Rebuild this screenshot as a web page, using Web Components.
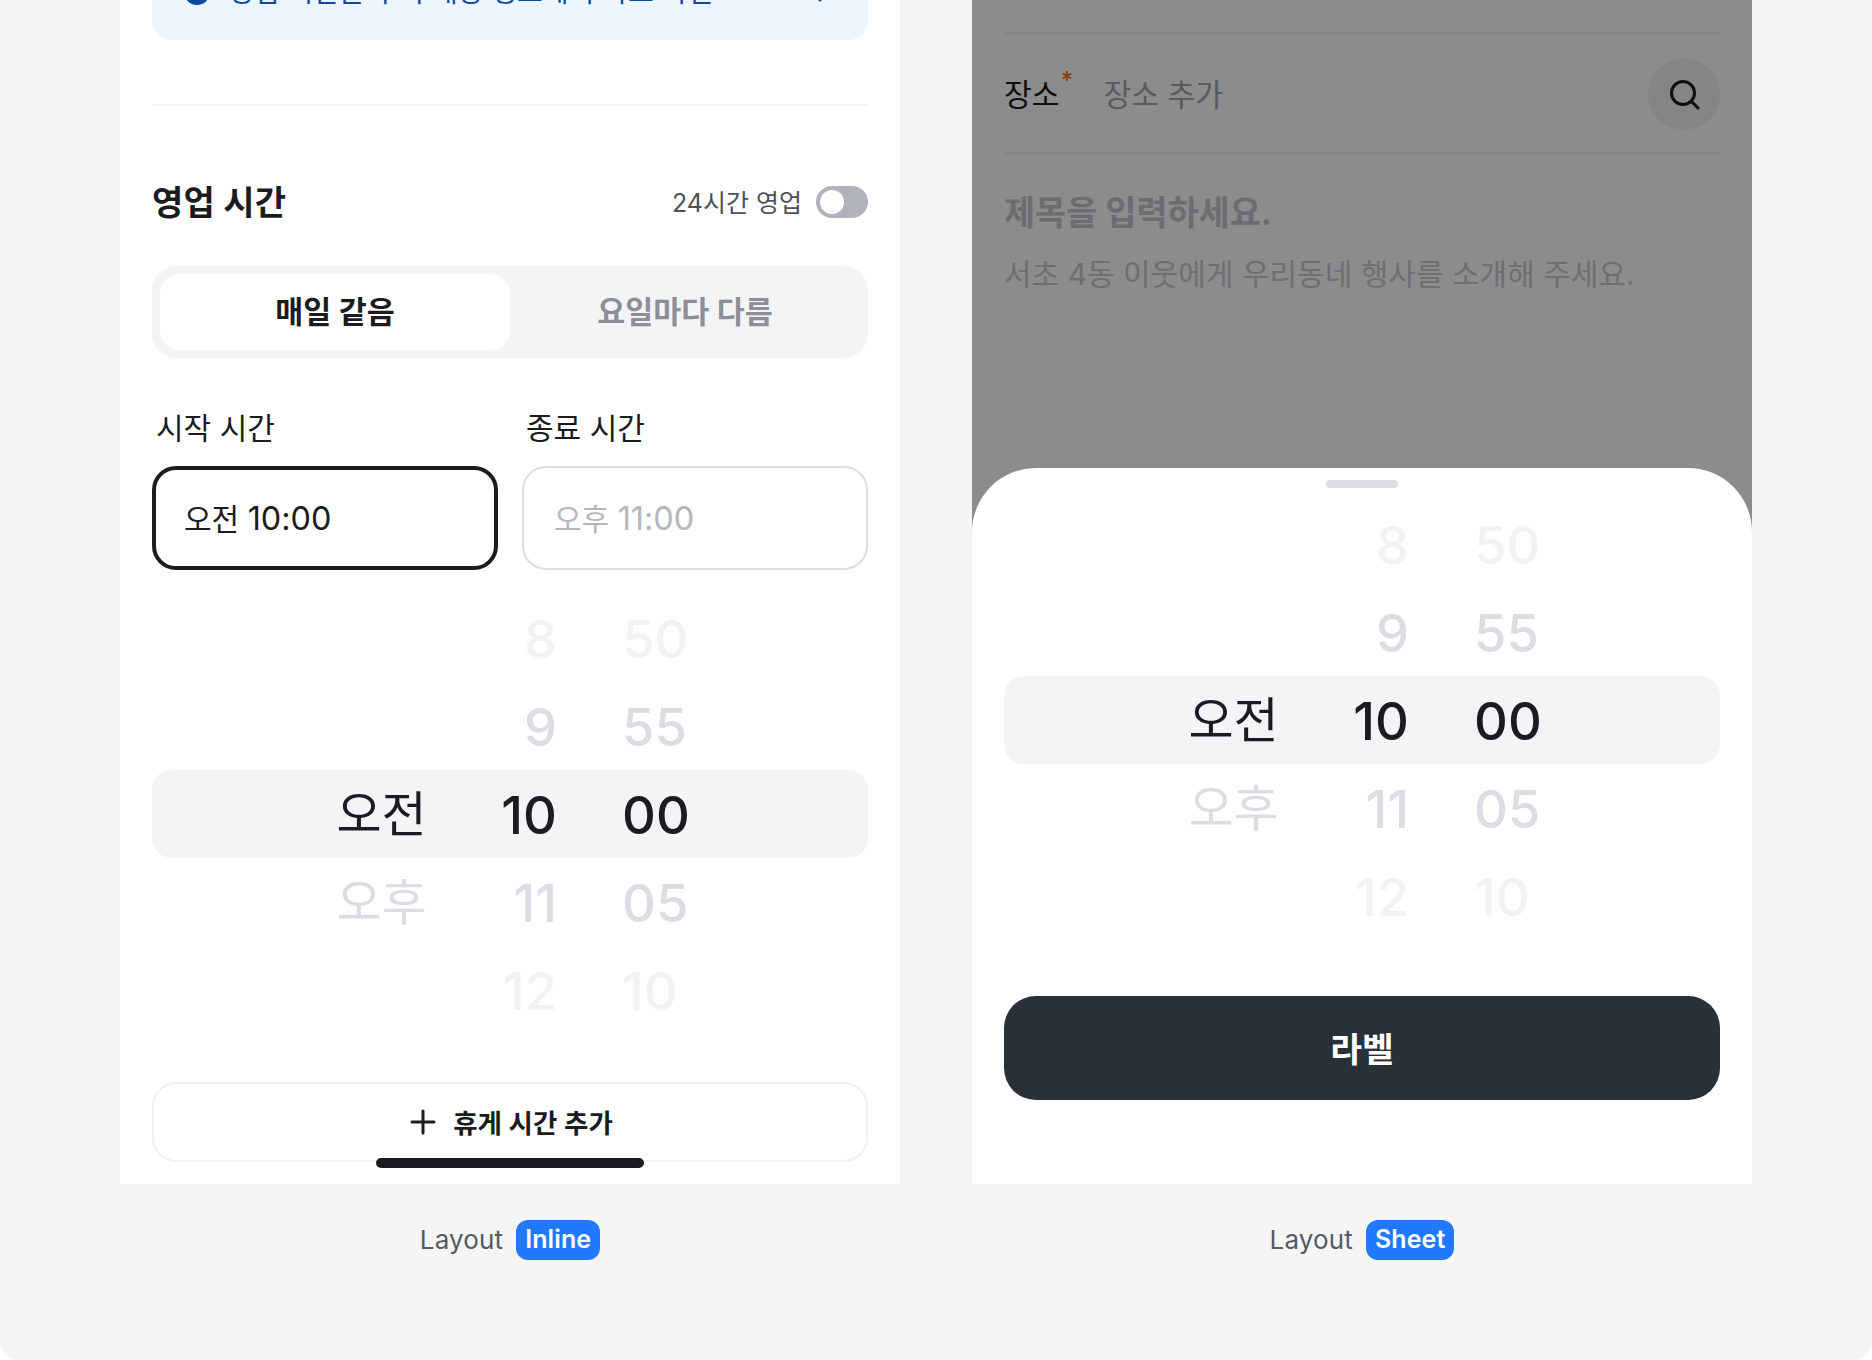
<!DOCTYPE html>
<html lang="ko">
<head>
<meta charset="utf-8">
<title>Time picker layouts</title>
<style>
  html, body { margin: 0; padding: 0; background: #fff; }
  body { font-family: Inter, "Noto Sans CJK KR", sans-serif; color: #1a1c20; }
</style>
</head>
<body>
<demo-page>
  <demo-frame badge="Inline">
    <inline-screen></inline-screen>
  </demo-frame>
  <demo-frame badge="Sheet">
    <sheet-screen></sheet-screen>
  </demo-frame>
</demo-page>

<script>
function el(name, css, html) {
  customElements.define(name, class extends HTMLElement {
    constructor() {
      super();
      this.attachShadow({ mode: 'open' }).innerHTML = '<style>' + css + '</style>' + html;
    }
  });
}

const ff = 'font-family: Inter, "Noto Sans CJK KR", sans-serif;';

el('demo-page', `
  :host { display: grid; grid-template-columns: 780px 780px; column-gap: 72px; padding: 0 120px;
          height: 1360px; box-sizing: border-box; background: #f5f5f5; overflow: hidden;
          border-radius: 0 0 20px 20px; ${ff} }
`, '<slot></slot>');

customElements.define('demo-frame', class extends HTMLElement {
  constructor() {
    super();
    const badge = this.getAttribute('badge');
    this.attachShadow({ mode: 'open' }).innerHTML = `
      <style>
        :host { display: block; }
        .panel { height: 1184px; background: #fff; overflow: hidden; position: relative; }
        .cap { display: flex; justify-content: center; align-items: center; gap: 13px; margin-top: 36px; height: 40px; }
        .lab { font-size: 26px; color: #555a66; letter-spacing: .15px; padding-bottom: 2px; }
        .badge { height: 40px; box-sizing: border-box; display: flex; align-items: center; padding: 0 9px 2px; border-radius: 12px;
                 background: #2079ff; color: #fff; font-size: 25px; font-weight: 600; letter-spacing: .1px; }
      </style>
      <div class="panel"><slot></slot></div>
      <div class="cap"><span class="lab">Layout</span><span class="badge">${badge}</span></div>`;
  }
});

el('info-banner', `
  :host { display: flex; align-items: center; gap: 18px; height: 96px; margin-top: -56px; padding: 0 32px;
          box-sizing: border-box; background: #edf5ff; border-radius: 20px; color: #0b4aa0; font-size: 28px; }
  .dot { width: 26px; height: 26px; border-radius: 50%; background: #0b4aa0; flex: none; }
  .txt { flex: 1; white-space: nowrap; padding-bottom: 4px; }
  svg { flex: none; }
`, `<span class="dot"></span><span class="txt">영업 시간은 우리 매장 정보에서 바로 확인 ›</span>
    <svg width="24" height="24" viewBox="0 0 24 24" fill="none" stroke="#0b4aa0" stroke-width="3" stroke-linecap="round" stroke-linejoin="round"><path d="M8 4l8 8-8 8"/></svg>`);

el('section-head', `
  :host { display: flex; justify-content: space-between; align-items: center; height: 40px; }
  .t { font-size: 34px; font-weight: 700; color: #1a1c20; letter-spacing: .2px; padding-bottom: 3px; }
  .r { display: flex; align-items: center; gap: 14px; font-size: 25px; color: #4d5159; }
  .r > span:first-child { padding-bottom: 2px; }
  .sw { width: 52px; height: 32px; border-radius: 16px; background: #b0b3ba; padding: 4px; box-sizing: border-box; }
  .k { display: block; width: 24px; height: 24px; border-radius: 50%; background: #fff; }
`, `<span class="t">영업 시간</span><span class="r"><span>24시간 영업</span><span class="sw"><span class="k"></span></span></span>`);

el('seg-control', `
  :host { display: grid; grid-template-columns: 1fr 1fr; height: 92px; padding: 8px; box-sizing: border-box;
          background: #f3f4f6; border-radius: 24px; font-size: 30.4px; font-weight: 600; }
  span { display: flex; align-items: center; justify-content: center; border-radius: 20px; padding-bottom: 4px; box-sizing: border-box; }
  .on { background: #fff; color: #1a1c20; }
  .off { color: #8c8f97; }
`, `<span class="on">매일 같음</span><span class="off">요일마다 다름</span>`);

customElements.define('time-field', class extends HTMLElement {
  constructor() {
    super();
    const active = this.hasAttribute('active');
    this.attachShadow({ mode: 'open' }).innerHTML = `
      <style>
        :host { display: block; }
        .l { font-size: 30px; line-height: 40px; padding: 0 0 0 4px; color: #1a1c20; }
        .b { margin-top: 18px; height: 104px; box-sizing: border-box; border-radius: 24px; display: flex; align-items: center;
             padding: 0 0 2px ${active ? 28 : 30}px; font-size: 30px; white-space: pre;
             border: ${active ? '4px solid #1a1c20' : '2px solid #dcdde2'}; color: ${active ? '#1a1c20' : '#b4b6bc'}; }
        .d { font-size: 32.4px; }
      </style>
      <div class="l">${this.getAttribute('label')}</div><div class="b"><span>${this.getAttribute('meridiem')} <span class="d">${this.getAttribute('time')}</span></span></div>`;
  }
});

el('wheel-picker', `
  :host { display: block; }
  .row { display: grid; grid-template-columns: 85px 133px 1fr; height: 88px; align-items: center;
         padding: 3px 0 0 187px; font-size: 52.5px; font-weight: 500; line-height: 85px; border-radius: 20px; box-sizing: border-box; }
  .row > span:nth-child(2) { text-align: right; }
  .row > span:nth-child(3) { padding-left: 65px; }
  .a { font-size: 49px; font-weight: 400; white-space: nowrap; display: flex; justify-content: center; margin-top: -3px; }
  .far { color: #f1f2f4; }
  .near { color: #dcdde2; }
  .sel { color: #1a1c20; background: #f3f4f6; }
`, `
  <div class="row far"><span class="a"></span><span>8</span><span>50</span></div>
  <div class="row near"><span class="a"></span><span>9</span><span>55</span></div>
  <div class="row sel"><span class="a">오전</span><span>10</span><span>00</span></div>
  <div class="row near"><span class="a">오후</span><span>11</span><span>05</span></div>
  <div class="row far"><span class="a"></span><span>12</span><span>10</span></div>
`);

el('add-button', `
  :host { display: flex; align-items: center; justify-content: center; gap: 14px; height: 80px; box-sizing: border-box;
          border: 2px solid #f0f1f3; border-radius: 24px; font-size: 26.5px; font-weight: 600; color: #1a1c20; }
  span { padding-bottom: 2px; }
`, `<svg width="32" height="32" viewBox="0 0 32 32" fill="none" stroke="#1a1c20" stroke-width="3" stroke-linecap="round"><path d="M16 5v22M5 16h22"/></svg><span>휴게 시간 추가</span>`);

el('inline-screen', `
  :host { display: block; padding: 0 32px; height: 100%; }
  .div { height: 2px; background: #f1f2f4; margin-top: 64px; }
  section-head { margin-top: 76px; }
  seg-control { margin-top: 44px; }
  .fields { display: grid; grid-template-columns: 1fr 1fr; column-gap: 24px; margin-top: 50px; }
  wheel-picker { margin-top: 24px; }
  add-button { margin-top: 48px; }
  .home { position: absolute; left: 256px; bottom: 16px; width: 268px; height: 10px; border-radius: 5px; background: #1a1c20; }
`, `
  <info-banner></info-banner>
  <div class="div"></div>
  <section-head></section-head>
  <seg-control></seg-control>
  <div class="fields">
    <time-field active label="시작 시간" meridiem="오전" time="10:00"></time-field>
    <time-field label="종료 시간" meridiem="오후" time="11:00"></time-field>
  </div>
  <wheel-picker></wheel-picker>
  <add-button></add-button>
  <div class="home"></div>
`);

el('sheet-screen', `
  :host { display: block; padding: 0 32px; }
  .line { height: 2px; background: #f0f1f3; margin-top: 32px; }
  .place { display: flex; align-items: center; height: 118px; font-size: 30.2px; padding-top: 2px; box-sizing: border-box; }
  .place + .line { margin-top: 0; }
  .k { position: relative; color: #1a1c20; padding-bottom: 3px; }
  .k i { position: absolute; left: 57px; top: -5px; font-style: normal; font-size: 24px; color: #ff6600; }
  .v { margin-left: 44px; color: #a4a6ab; flex: 1; padding-bottom: 3px; }
  .s { width: 72px; height: 72px; border-radius: 50%; background: #f0f2f4; display: flex; align-items: center; justify-content: center; }
  .h { margin-top: 34px; font-size: 33.8px; line-height: 48px; font-weight: 700; color: #c4c6cc; padding-top: 1px; }
  .p { margin-top: 15px; font-size: 30px; line-height: 44px; color: #c8cacf; }
  .scrim { position: absolute; inset: 0; background: rgba(0,0,0,.45); }
  .sheet { position: absolute; left: 0; right: 0; bottom: 0; height: 716px; background: #fff; border-radius: 64px 64px 0 0;
           padding: 12px 32px 0; box-sizing: border-box; }
  .grab { width: 72px; height: 8px; border-radius: 4px; background: #dcdde2; margin: 0 auto; }
  wheel-picker { margin-top: 12px; }
  .btn { margin-top: 56px; height: 104px; border-radius: 32px; background: #2a3038; color: #fff; display: flex;
         align-items: center; justify-content: center; font-size: 34.5px; font-weight: 600; padding-bottom: 3px; box-sizing: border-box; }
`, `
  <div class="line"></div>
  <div class="place">
    <span class="k">장소<i>*</i></span><span class="v">장소 추가</span>
    <span class="s"><svg width="32" height="32" viewBox="0 0 32 32" fill="none" stroke="#1a1c20" stroke-width="3" stroke-linecap="round"><circle cx="15" cy="15" r="11.5"/><path d="M24 24l6 6"/></svg></span>
  </div>
  <div class="line"></div>
  <div class="h">제목을 입력하세요.</div>
  <div class="p">서초 4동 이웃에게 우리동네 행사를 소개해 주세요.</div>
  <div class="scrim"></div>
  <div class="sheet">
    <div class="grab"></div>
    <wheel-picker></wheel-picker>
    <div class="btn">라벨</div>
  </div>
`);
</script>
</body>
</html>
